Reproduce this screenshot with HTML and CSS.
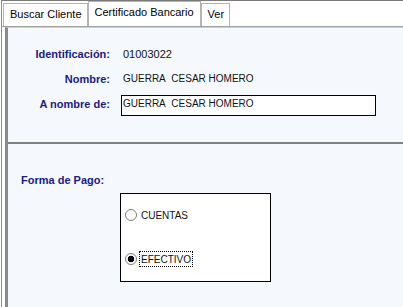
FILE: index.html
```html
<!DOCTYPE html>
<html>
<head>
    <title>Certificado Bancario</title>
    <meta charset="utf-8">
    <link rel="stylesheet" href="styles.css">
</head>
<body>
    <div class="window">
        <div class="tabs">
            <div class="tab">Buscar Cliente</div>
            <div class="tab active">Certificado Bancario</div>
            <div class="tab">Ver</div>
        </div>
        <div class="panel">
            <section class="datos">
                <div class="label">Identificación:</div>
                <div class="value num">01003022</div>
                <div class="label">Nombre:</div>
                <div class="value">GUERRA&nbsp; CESAR HOMERO</div>
                <div class="label">A nombre de:</div>
                <div class="input">GUERRA&nbsp; CESAR HOMERO</div>
            </section>
            <section class="pago">
                <div class="label">Forma de Pago:</div>
                <div class="opciones">
                    <div class="opcion">
                        <span class="radio"></span>
                        <span class="texto">CUENTAS</span>
                    </div>
                    <div class="opcion">
                        <span class="radio checked"></span>
                        <span class="texto focus">EFECTIVO</span>
                    </div>
                </div>
            </section>
        </div>
    </div>
</body>
</html>
```

FILE: styles.css
```css
body {
    margin: 0;
    background-color: #ffffff;
    font-family: "Liberation Sans", Arial, sans-serif;
    color: #111111;
    height: 307px;
    overflow: hidden;
}

.window {
    margin-left: 1px;
    height: 306px;
    border-top: 1px solid #7a7a7a;
    border-left: 1px solid #8c8c8c;
}

.tabs {
    display: flex;
    align-items: flex-end;
    height: 25px;
    padding-left: 1px;
    border-bottom: 1px solid #a0a0a0;
}

.tab {
    height: 22px;
    line-height: 20px;
    padding: 0 5px 0 6px;
    font-size: 11px;
    color: #000;
    background-color: #ffffff;
    border: 1px solid #b4b4b4;
    border-bottom: none;
}

.tab.active {
    height: 24px;
    line-height: 21px;
    padding: 0 6px;
}

.panel {
    margin-left: 3px;
    height: 279px;
    background-color: #f5f9fd;
    border-left: 3px solid #8a8a8a;
    border-top: 1px solid #cfcfcf;
}

.label {
    font-size: 11px;
    font-weight: bold;
    color: #1b1b80;
}

.datos {
    display: grid;
    grid-template-columns: 102px 255px;
    grid-auto-rows: 25px;
    column-gap: 11px;
    align-items: center;
    height: 101px;
    padding-top: 13px;
    box-sizing: content-box;
    border-bottom: 2px solid #808080;
}

.datos .label {
    text-align: right;
}

.value {
    padding-left: 2px;
    font-size: 10px;
}

.value.num {
    font-size: 11px;
}

.input {
    align-self: start;
    margin-top: 4px;
    height: 21px;
    box-sizing: border-box;
    padding: 1px 0 0 1px;
    font-size: 10px;
    line-height: 13px;
    background-color: #ffffff;
    border: 1px solid #000000;
}

.pago {
    padding: 29px 0 0 13px;
}

.pago .label {
    line-height: 14px;
}

.opciones {
    display: flex;
    flex-direction: column;
    gap: 28px;
    width: 151px;
    height: 89px;
    box-sizing: border-box;
    margin: 6px 0 0 99px;
    padding: 13px 0 0 4px;
    background-color: #ffffff;
    border: 1px solid #000000;
}

.opcion {
    display: flex;
    align-items: center;
    gap: 2px;
    height: 16px;
    font-size: 10px;
}

.radio {
    width: 12px;
    height: 12px;
    box-sizing: border-box;
    border: 1px solid #7b7b7b;
    border-radius: 50%;
    background: #ffffff;
}

.radio.checked {
    background: radial-gradient(circle, #000000 0 3px, #ffffff 3.6px);
}

.texto {
    height: 16px;
    line-height: 15px;
    padding: 0 1px;
    box-sizing: border-box;
    border: 1px dotted transparent;
}

.texto.focus {
    border-color: #000000;
}
```
